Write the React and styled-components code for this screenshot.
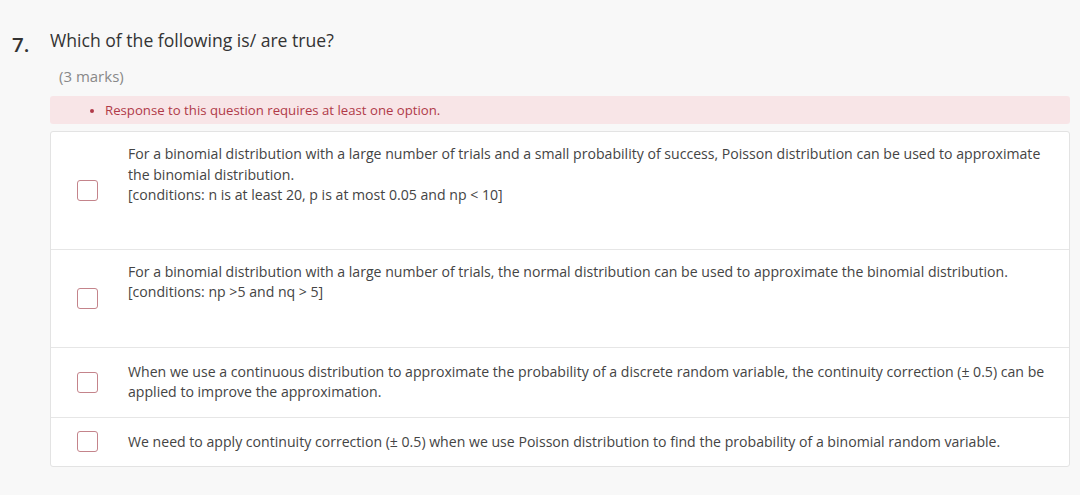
import React from 'react';
import styled, { createGlobalStyle } from 'styled-components';

const GlobalStyle = createGlobalStyle`
  html, body {
    margin: 0;
    padding: 0;
    background: #f8f8f8;
    font-family: "Open Sans", "Noto Sans", sans-serif;
    color: #333333;
  }
`;

const options = [
  {
    id: 1,
    lines: [
      'For a binomial distribution with a large number of trials and a small probability of success, Poisson distribution can be used to approximate the binomial distribution.',
      '[conditions: n is at least 20, p is at most 0.05 and np < 10]',
    ],
    top: 12,
    bottom: 43,
  },
  {
    id: 2,
    lines: [
      'For a binomial distribution with a large number of trials, the normal distribution can be used to approximate the binomial distribution.',
      '[conditions: np >5 and nq > 5]',
    ],
    top: 12,
    bottom: 44,
  },
  {
    id: 3,
    lines: [
      'When we use a continuous distribution to approximate the probability of a discrete random variable, the continuity correction (± 0.5) can be applied to improve the approximation.',
    ],
    top: 14,
    bottom: 14,
  },
  {
    id: 4,
    lines: [
      'We need to apply continuity correction (± 0.5) when we use Poisson distribution to find the probability of a binomial random variable.',
    ],
    top: 14,
    bottom: 14,
  },
];

const App = () => {
  return (
    <>
      <GlobalStyle />
      <Page>
        <Header>
          <Number>7.</Number>
          <Question>Which of the following is/ are true?</Question>
        </Header>
        <Body>
          <Marks>(3 marks)</Marks>
          <Alert>
            <AlertList>
              <li>Response to this question requires at least one option.</li>
            </AlertList>
          </Alert>
          <Card>
            {options.map(option => (
              <OptionRow key={option.id}>
                <CheckCell>
                  <CheckBox />
                </CheckCell>
                <OptionText $top={option.top} $bottom={option.bottom}>
                  {option.lines.map((line, i) => (
                    <div key={i}>{line}</div>
                  ))}
                </OptionText>
              </OptionRow>
            ))}
          </Card>
        </Body>
      </Page>
    </>
  );
};

const Page = styled.div`
  padding: 27px 10px 28px 12px;
`;

const Header = styled.div`
  display: flex;
  align-items: flex-start;
`;

const Number = styled.div`
  width: 38px;
  font-size: 20.5px;
  font-weight: 600;
  line-height: 26px;
  padding-top: 4px;
  color: #333333;
`;

const Question = styled.div`
  font-size: 17.6px;
  line-height: 26px;
  color: #333333;
`;

const Body = styled.div`
  margin-left: 38px;
`;

const Marks = styled.div`
  margin: 9px 0 0 9px;
  font-size: 15px;
  line-height: 20px;
  color: #888888;
`;

const Alert = styled.div`
  margin-top: 10px;
  background: #f8e5e7;
  border-radius: 3px;
  height: 28px;
  display: flex;
  align-items: center;
`;

const AlertList = styled.ul`
  margin: 0;
  padding-left: 55px;
  font-size: 13.2px;
  line-height: 18px;
  color: #b03a48;

  li::marker {
    font-size: 12px;
  }
`;

const Card = styled.div`
  margin-top: 7px;
  background: #ffffff;
  border: 1px solid #e3e3e3;
  border-radius: 3px;
`;

const OptionRow = styled.div`
  display: flex;
  align-items: center;
  border-top: 1px solid #e6e6e6;

  &:first-child {
    border-top: none;
  }
`;

const CheckCell = styled.div`
  box-sizing: border-box;
  flex: 0 0 77px;
  display: flex;
  align-items: center;
  padding-left: 26px;
`;

const CheckBox = styled.span`
  box-sizing: border-box;
  width: 21px;
  height: 21px;
  border: 1.5px solid #c4848b;
  border-radius: 3px;
`;

const OptionText = styled.div`
  flex: 1;
  padding: ${props => props.$top}px 22px ${props => props.$bottom}px 0;
  font-size: 14.1px;
  line-height: 20.5px;
  color: #444444;
`;

export default App;
